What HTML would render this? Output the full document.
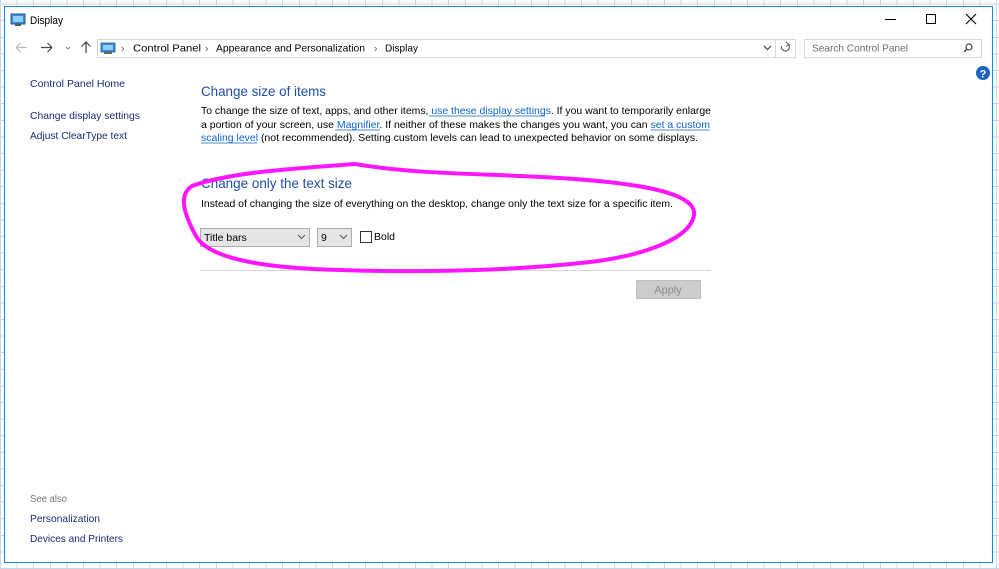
<!DOCTYPE html>
<html><head><meta charset="utf-8"><style>
html,body{margin:0;padding:0;width:999px;height:569px;overflow:hidden;}
body{background:#fff;
background-image:repeating-linear-gradient(90deg,#c9d6e3 0 1px,transparent 1px 16.6px),repeating-linear-gradient(0deg,#c9d6e3 0 1px,transparent 1px 16.6px);}
svg text{font-family:"Liberation Sans",sans-serif;}
</style></head><body>
<svg width="999" height="569" viewBox="0 0 999 569" style="position:absolute;left:0;top:0">
<rect x="4.5" y="6.5" width="988" height="556" fill="#fff" stroke="#1a86d8" stroke-width="1"/>
<rect x="11" y="14" width="14" height="10" fill="#3c8ad6" stroke="#1d5e9e" stroke-width="1"/>
<rect x="13" y="16" width="10" height="6" fill="#8fd0f5"/>
<rect x="15" y="24" width="6" height="2" fill="#555"/>
<text x="30" y="24" font-size="11" fill="#000" textLength="33" lengthAdjust="spacingAndGlyphs">Display</text>
<line x1="885" y1="19.5" x2="896" y2="19.5" stroke="#000"/>
<rect x="926.5" y="14.5" width="9" height="9" fill="none" stroke="#000"/>
<path d="M966 14 L976 24 M976 14 L966 24" stroke="#000" stroke-width="1.1"/>
<path d="M16 47.5 H27 M16 47.5 L20.5 43 M16 47.5 L20.5 52" stroke="#bbb" fill="none" stroke-width="1.2"/>
<path d="M41 47.5 H52 M52 47.5 L47.5 43 M52 47.5 L47.5 52" stroke="#444" fill="none" stroke-width="1.2"/>
<path d="M66 47 L68 49 L70 47" stroke="#888" fill="none"/>
<path d="M86 53 V42 M81.5 46.5 L86 42 L90.5 46.5" stroke="#444" fill="none" stroke-width="1.2"/>
<rect x="97.5" y="39.5" width="678" height="18" fill="#fff" stroke="#d9d9d9"/>
<rect x="775.5" y="39.5" width="20" height="18" fill="#fff" stroke="#d9d9d9"/>
<rect x="101" y="43" width="14" height="9" fill="#3c8ad6" stroke="#1d5e9e" stroke-width="0.8"/>
<rect x="103" y="45" width="10" height="5" fill="#8fd0f5"/>
<rect x="104" y="52" width="8" height="2" fill="#666"/>
<g font-size="10.5" fill="#000">
<text x="121" y="51.5" fill="#555">›</text>
<text x="133" y="51.5" textLength="68" lengthAdjust="spacingAndGlyphs">Control Panel</text>
<text x="205" y="51.5" fill="#555">›</text>
<text x="216" y="51.5" textLength="149" lengthAdjust="spacingAndGlyphs">Appearance and Personalization</text>
<text x="374" y="51.5" fill="#555">›</text>
<text x="385" y="51.5" textLength="33" lengthAdjust="spacingAndGlyphs">Display</text>
</g>
<path d="M764 46 L767.5 49.5 L771 46" stroke="#444" fill="none" stroke-width="1.2"/>
<path d="M788.5 44.5 A4 4 0 1 1 781.5 46" stroke="#555" fill="none" stroke-width="1.1"/>
<path d="M786 42 L789 44.5 L786 46.5" stroke="#555" fill="none"/>
<rect x="804.5" y="39.5" width="177" height="18" fill="#fff" stroke="#d9d9d9"/>
<text x="812" y="51.5" font-size="10.5" fill="#6d6d6d" textLength="96" lengthAdjust="spacingAndGlyphs">Search Control Panel</text>
<circle cx="969" cy="47" r="3" fill="none" stroke="#444" stroke-width="1.2"/>
<line x1="967" y1="49" x2="964" y2="52" stroke="#444" stroke-width="1.4"/>
<circle cx="983" cy="73" r="7" fill="#1b64c2"/>
<text x="983" y="77.5" font-size="11" font-weight="bold" fill="#fff" text-anchor="middle">?</text>
<g font-size="10.5" fill="#1e2a78">
<text x="30" y="87" textLength="95" lengthAdjust="spacingAndGlyphs">Control Panel Home</text>
<text x="30" y="119" textLength="110" lengthAdjust="spacingAndGlyphs">Change display settings</text>
<text x="30" y="139" textLength="97" lengthAdjust="spacingAndGlyphs">Adjust ClearType text</text>
<text x="30" y="502" fill="#777" textLength="37" lengthAdjust="spacingAndGlyphs">See also</text>
<text x="30" y="522" textLength="70" lengthAdjust="spacingAndGlyphs">Personalization</text>
<text x="30" y="542" textLength="93" lengthAdjust="spacingAndGlyphs">Devices and Printers</text>
</g>
<text x="201" y="96" font-size="14" fill="#1f4fa3" textLength="125" lengthAdjust="spacingAndGlyphs">Change size of items</text>
<g font-size="10.5" fill="#000">
<text x="201" y="114" textLength="510" lengthAdjust="spacingAndGlyphs">To change the size of text, apps, and other items, <tspan fill="#0a64c8">use these display settings</tspan>.  If you want to temporarily enlarge</text>
<text x="201" y="128" textLength="509" lengthAdjust="spacingAndGlyphs">a portion of your screen, use <tspan fill="#0a64c8">Magnifier</tspan>.  If neither of these makes the changes you want, you can <tspan fill="#0a64c8">set a custom</tspan></text>
<text x="201" y="141" textLength="497" lengthAdjust="spacingAndGlyphs"><tspan fill="#0a64c8">scaling level</tspan> (not recommended).  Setting custom levels can lead to unexpected behavior on some displays.</text>
</g>
<g stroke="#0a64c8" stroke-width="0.8">
<line x1="429" y1="116" x2="545" y2="116"/>
<line x1="335" y1="130" x2="380" y2="130"/>
<line x1="651" y1="130" x2="710" y2="130"/>
<line x1="201" y1="143" x2="257" y2="143"/>
</g>
<text x="201" y="188" font-size="14" fill="#1f4fa3" textLength="151" lengthAdjust="spacingAndGlyphs">Change only the text size</text>
<text x="201" y="207" font-size="10.5" fill="#000" textLength="472" lengthAdjust="spacingAndGlyphs">Instead of changing the size of everything on the desktop, change only the text size for a specific item.</text>
<rect x="200.5" y="228.5" width="109" height="18" fill="#e5e5e5" stroke="#adadad"/>
<text x="204" y="241" font-size="10.5" fill="#000">Title bars</text>
<path d="M298 235 L301.5 238.5 L305 235" stroke="#555" fill="none"/>
<rect x="317.5" y="228.5" width="34" height="18" fill="#e5e5e5" stroke="#adadad"/>
<text x="321" y="241" font-size="10.5" fill="#000">9</text>
<path d="M340 235 L343.5 238.5 L347 235" stroke="#555" fill="none"/>
<rect x="360.5" y="231.5" width="11" height="11" fill="#fff" stroke="#333"/>
<text x="374" y="240" font-size="10.5" fill="#000" textLength="21" lengthAdjust="spacingAndGlyphs">Bold</text>
<line x1="200" y1="270.5" x2="711" y2="270.5" stroke="#d5d5d5"/>
<rect x="636.5" y="280.5" width="64" height="18" fill="#cccccc" stroke="#bfbfbf"/>
<text x="668" y="293.5" font-size="11" fill="#8a8a8a" text-anchor="middle">Apply</text>
<path d="M355 164 C300 168 230 172 192 186 C178 195 184 214 196 236 C208 258 260 268 340 270 C430 273 520 270 590 262 C640 256 690 240 694 215 C697 193 640 183 560 178 C480 173 420 175 355 164 Z" fill="none" stroke="#ff16ff" stroke-width="4" stroke-linecap="round"/>
</svg>
</body></html>
